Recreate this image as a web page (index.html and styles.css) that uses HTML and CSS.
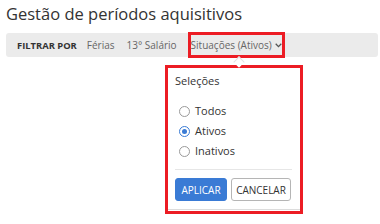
FILE: index.html
```html
<!DOCTYPE html>
<html lang="pt">
<head>
<meta charset="utf-8">
<link rel="stylesheet" href="styles.css">
</head>
<body>
<div class="page">
  <h1 class="title">Gestão de períodos aquisitivos</h1>
  <div class="filterbar">
    <span class="filter-label">FILTRAR POR</span>
    <span class="filter-item">Férias</span>
    <span class="filter-item">13° Salário</span>
    <span class="filter-item filter-active">Situações (Ativos)<svg class="chevron" width="7" height="5" viewBox="0 0 7 5"><path d="M0.7 0.8 L3.5 3.6 L6.3 0.8" fill="none" stroke="#555" stroke-width="1.3"/></svg></span>
  </div>
  <div class="popover-mark">
    <div class="popover-arrow"></div>
    <div class="popover">
      <div class="popover-title">Seleções</div>
      <ul class="radio-list">
        <li class="radio-row"><span class="radio"></span>Todos</li>
        <li class="radio-row"><span class="radio radio-checked"></span>Ativos</li>
        <li class="radio-row"><span class="radio"></span>Inativos</li>
      </ul>
      <div class="divider"></div>
      <div class="actions">
        <button class="btn btn-primary">APLICAR</button>
        <button class="btn btn-default">CANCELAR</button>
      </div>
    </div>
  </div>
</div>
</body>
</html>
```
FILE: styles.css
```css
* { box-sizing: border-box; }
html, body { margin: 0; padding: 0; background: #fff; }
body {
  font-family: "Open Sans", "DejaVu Sans", sans-serif;
  color: #333;
  width: 380px;
  height: 224px;
  overflow: hidden;
}
.page {
  position: relative;
  padding: 2px 2px 0 6px;
}
.title {
  margin: 0;
  font-size: 16.5px;
  line-height: 24px;
  font-weight: 400;
  color: #333;
}
.filterbar {
  margin-top: 7px;
  height: 24px;
  width: 372px;
  background: #ebebeb;
  border-radius: 3px;
  display: flex;
  align-items: center;
  padding-left: 11px;
  font-size: 10px;
}
.filter-label {
  font-weight: 700;
  font-size: 9.4px;
  color: #333;
  margin-right: 10px;
}
.filter-item {
  color: #666;
  margin-right: 12px;
  white-space: nowrap;
}
.filter-active {
  display: flex;
  align-items: center;
  height: 26px;
  margin: -1px 0 -1px -1px;
  border: 3px solid #ec1c24;
  padding: 0;
}
.chevron {
  margin-left: 3px;
  margin-top: 1px;
}
.popover-mark {
  position: absolute;
  left: 165px;
  top: 65px;
  width: 138px;
  height: 149px;
  border: 3px solid #ec1c24;
  background: #fff;
  padding-bottom: 1px;
}
.popover-arrow {
  position: absolute;
  left: 67px;
  top: -10px;
  width: 8px;
  height: 8px;
  transform: rotate(45deg);
  border-left: 1px solid #e2e2e2;
  border-top: 1px solid #e2e2e2;
  background: #fff;
}
.popover {
  height: 100%;
  background: #fff;
  border-bottom: 1px solid #dcdcdc;
  padding: 5px 8px 0 7px;
}
.popover-title {
  font-size: 11px;
  line-height: 15px;
  color: #333;
}
.radio-list {
  list-style: none;
  margin: 13px 0 0 0;
  padding: 0 0 0 4px;
}
.radio-row {
  display: flex;
  align-items: center;
  height: 20px;
  font-size: 11px;
  line-height: 20px;
  color: #333;
}
.radio {
  width: 11px;
  height: 11px;
  border: 1px solid #9a9a9a;
  border-radius: 50%;
  margin-right: 5px;
  display: flex;
  align-items: center;
  justify-content: center;
  background: #fff;
}
.radio-checked {
  border-color: #3a7bd5;
}
.radio-checked::after {
  content: "";
  width: 5px;
  height: 5px;
  border-radius: 50%;
  background: #3a7bd5;
}
.divider {
  margin-top: 8px;
  border-top: 1px solid #e6e6e6;
}
.actions {
  display: flex;
  gap: 4px;
  margin-top: 8px;
}
.btn {
  height: 23px;
  font-family: "Open Sans", "DejaVu Sans", sans-serif;
  font-size: 10px;
  border-radius: 3px;
  padding: 0;
  cursor: pointer;
}
.btn-primary {
  width: 52px;
  background: #3a7bd5;
  border: 1px solid #3a7bd5;
  color: #fff;
}
.btn-default {
  width: 60px;
  background: #fff;
  border: 1px solid #b5b5b5;
  color: #333;
}
```
